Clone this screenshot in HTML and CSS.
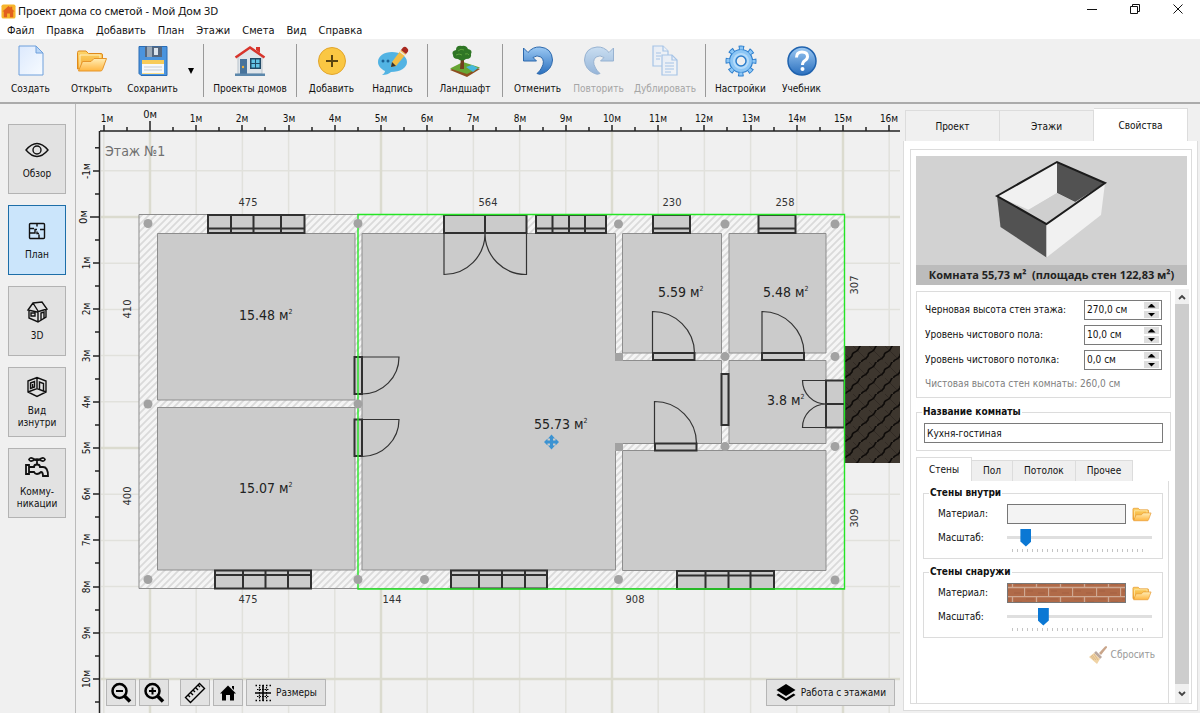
FILE: index.html
```html
<!DOCTYPE html>
<html lang="ru">
<head>
<meta charset="utf-8">
<title>Проект дома со сметой - Мой Дом 3D</title>
<link rel="stylesheet" href="styles.css">
</head>
<body>
<svg class="defs" aria-hidden="true">
  <defs>
    <linearGradient id="gold" x1="0" y1="0" x2="0" y2="1"><stop offset="0" stop-color="#fdd56b"/><stop offset="1" stop-color="#f3a72c"/></linearGradient>
    <linearGradient id="goldLight" x1="0" y1="0" x2="0" y2="1"><stop offset="0" stop-color="#ffedb5"/><stop offset="1" stop-color="#ffb640"/></linearGradient>
    <linearGradient id="paper" x1="0" y1="0" x2="1" y2="1"><stop offset="0" stop-color="#dce9fd"/><stop offset="1" stop-color="#f7fbff"/></linearGradient>
    <linearGradient id="blue" x1="0" y1="0" x2="0" y2="1"><stop offset="0" stop-color="#9cc9f3"/><stop offset="1" stop-color="#2a6fbe"/></linearGradient>
    <symbol id="folder" viewBox="0 0 32 24">
      <path d="M1.500 20V3.500Q1.500 2 3 2H10L12.500 4.500H25Q26.500 4.500 26.500 6V12L6 20Z" fill="url(#gold)" stroke="#e08a1c"/>
      <path d="M4 19V6H24V10" fill="none" stroke="#fff0c0"/>
      <path d="M2.500 22L6.500 12.500H15L18 9.500H30.500L26.500 20.500Q26 22 24.500 22Z" fill="url(#goldLight)" stroke="#e6952a"/>
    </symbol>
  </defs>
</svg>

<header class="titlebar">
  <svg class="app-icon" viewBox="0 0 16 16"><rect width="15" height="15" x=".5" y=".5" rx="2" fill="#f7b52c"/><path d="M1.500 8L8 2L10 4V3H12V5.500L14.500 8H13V14H9.500V10H6.500V14H3V8Z" fill="#e2601f"/></svg>
  <h1 class="title">Проект дома со сметой - Мой Дом 3D</h1>
  <button class="win-btn" type="button" aria-label="Свернуть"><svg viewBox="0 0 12 12"><path d="M1 6.500H11" /></svg></button>
  <button class="win-btn" type="button" aria-label="Развернуть"><svg viewBox="0 0 12 12"><path d="M1.500 3.500H8.500V10.500H1.500ZM3.500 3.500V1.500H10.500V8.500H8.500"/></svg></button>
  <button class="win-btn" type="button" aria-label="Закрыть"><svg viewBox="0 0 12 12"><path d="M1.500 1.500L10.500 10.500M10.500 1.500L1.500 10.500"/></svg></button>
</header>

<nav class="menu">
  <button type="button">Файл</button><button type="button">Правка</button><button type="button">Добавить</button><button type="button">План</button><button type="button">Этажи</button><button type="button">Смета</button><button type="button">Вид</button><button type="button">Справка</button>
</nav>

<div class="toolbar">
  <button class="tool" type="button"><svg viewBox="0 0 32 32"><path d="M4 1H21L28 8V30H4Z" fill="url(#paper)" stroke="#6ea0dc"/><path d="M21 1V8H28Z" fill="#b9d6f7" stroke="#6ea0dc"/></svg>Создать</button>
  <button class="tool" type="button"><svg viewBox="0 0 32 32"><use href="#folder" y="4" width="32" height="24"/></svg>Открыть</button>
  <button class="tool" type="button"><svg viewBox="0 0 32 32"><path d="M2 1.500H30V30.500H4L2 28.500Z" fill="#4a94de" stroke="#2a6cb5"/><path d="M8 1.500H25V12H8Z" fill="#55677e"/><path d="M17 3H21V10H17Z" fill="#dce5ee"/><path d="M10 1.500H15V12H10Z" fill="#9aa9b8"/><path d="M5 15H27V28.500H5Z" fill="#f6f8fa"/><path d="M5 15H27V19H5Z" fill="#f7cb58"/><path d="M7 22H25M7 25H25" stroke="#c5ccd4"/><path d="M5 28.500H27" stroke="#ffe08a"/></svg>Сохранить</button>
  <button class="tool-arrow" type="button" aria-label="Варианты сохранения"><svg viewBox="0 0 6 6"><path d="M0 0H6L3 6Z"/></svg></button>
  <span class="sep"></span>
  <button class="tool tool-wide" type="button"><svg viewBox="0 0 32 32"><path d="M4 12L16 3L28 12V29H4Z" fill="#dfe5ea" stroke="#b9c3cb"/><path d="M1.500 12.500L16 2.500L30.500 12.500" fill="none" stroke="#d8352c" stroke-width="2.500"/><path d="M22 2H26V8L22 5Z" fill="#d8352c"/><path d="M6 14H13V29H6Z" fill="#47739b"/><path d="M16 13H27V24H16Z" fill="#214a66"/><path d="M17.500 14.500H21V18H17.500ZM22 14.500H25.500V18H22ZM17.500 19H21V22.500H17.500ZM22 19H25.500V22.500H22Z" fill="#62c3e4"/><circle cx="9" cy="22" r="1.200" fill="#f0b23c"/><path d="M1 28.500H31V31H1Z" fill="#5b87ab"/></svg>Проекты домов</button>
  <span class="sep"></span>
  <button class="tool" type="button"><svg viewBox="0 0 32 32"><circle cx="16" cy="16" r="13.500" fill="#fac743" stroke="#e2a52c"/><path d="M16 10V22M10 16H22" stroke="#5a4410" stroke-width="2"/></svg>Добавить</button>
  <button class="tool" type="button"><svg viewBox="0 0 32 32"><path d="M15 7C7 7 1 11 1 17C1 21 4 24 8 26C8 28 6 29 5 30C9 30 12 29 14 27C23 27 30 23 30 17C30 11 23 7 15 7Z" fill="#52b3e3"/><circle cx="6" cy="16" r="1.500" fill="#1b6296"/><circle cx="11" cy="16" r="1.500" fill="#1b6296"/><path d="M15 17L24 5L29 9L19 21L14 22Z" fill="#f3bd45"/><path d="M24 5L26 2.500Q28 1 30 3Q32 4.500 31 6.500L29 9Z" fill="#a8281f"/><path d="M15 17L19 21L14 22Z" fill="#333"/><path d="M23 6.500L28 10.500" stroke="#e9e9e9" stroke-width="1.500"/></svg>Надпись</button>
  <span class="sep"></span>
  <button class="tool tool-mid" type="button"><svg viewBox="0 0 32 32"><path d="M1 25L14 18L31 24L18 32Z" fill="#8d4f20"/><path d="M1 23.500L14 17L31 22.500L18 29Z" fill="#67a634"/><path d="M17 22L23 20L29 23L24 27Z" fill="#46b8dd"/><path d="M12 12H15V24H11Z" fill="#73401d"/><path d="M13 1Q7 0 7 5Q2 6 4 10Q4 14 9 14Q13 17 17 14Q23 14 22 9Q24 5 19 4Q17 0 13 1Z" fill="#2f7625"/><path d="M9 6Q12 3 15 5M7 10Q10 8 13 10M16 9Q19 8 20 10" stroke="#5ba33c" fill="none"/></svg>Ландшафт</button>
  <span class="sep"></span>
  <button class="tool" type="button"><svg viewBox="0 0 32 32"><path d="M1.500 3V16H14.500L11 12.500Q15 9.500 19 12Q23.500 16 19.500 23Q18 26 15 28.500Q17.500 30 20.500 28.500Q30 24.500 30.500 15Q30 3 18 2Q11 1.500 6 7.500Z" fill="url(#blue)" stroke="#2d69ad"/></svg>Отменить</button>
  <button class="tool" type="button" disabled><svg viewBox="0 0 32 32"><path d="M30.500 3V16H17.500L21 12.500Q17 9.500 13 12Q8.500 16 12.500 23Q14 26 17 28.500Q14.500 30 11.500 28.500Q2 24.500 1.500 15Q2 3 14 2Q21 1.500 26 7.500Z" fill="url(#blue)" stroke="#2d69ad"/></svg>Повторить</button>
  <button class="tool tool-dup" type="button" disabled><svg viewBox="0 0 32 32"><g fill="url(#paper)" stroke="#4e8fdb" stroke-width="1.200"><path d="M4 1H14L19 6V21H4Z"/><path d="M14 1V6H19"/><path d="M13 10H23L28 15V30H13Z"/><path d="M23 10V15H28M16 18H25M16 21H25M16 24H25M16 27H22M7 8H12M7 11H12M7 14H11" fill="none"/></g></svg>Дублировать</button>
  <span class="sep"></span>
  <button class="tool" type="button"><svg viewBox="0 0 32 32"><circle cx="16" cy="16" r="13" fill="none" stroke="#2b7dcc" stroke-width="5" stroke-dasharray="5.200 5.010" stroke-dashoffset="2.600"/><circle cx="16" cy="16" r="11.500" fill="#8cc6f5" stroke="#2b7dcc" stroke-width="1.200"/><circle cx="16" cy="16" r="13" fill="none" stroke="#8cc6f5" stroke-width="3.200" stroke-dasharray="3.400 6.810" stroke-dashoffset="1.700"/><circle cx="16" cy="16" r="8" fill="#b4dbfa"/><circle cx="16" cy="16" r="5" fill="#efefef" stroke="#2b7dcc" stroke-width="1.500"/></svg>Настройки</button>
  <button class="tool" type="button"><svg viewBox="0 0 32 32"><circle cx="16" cy="16" r="14" fill="url(#blue)" stroke="#1f62ae" stroke-width="1.500"/><path d="M10.500 12.500Q10.500 7 16 7Q21.500 7 21.500 11.500Q21.500 14 19 15.500Q16.500 17 16.500 20" fill="none" stroke="#fff" stroke-width="3"/><circle cx="16.500" cy="24" r="2" fill="#fff"/></svg>Учебник</button>
</div>

<main class="workspace">
  <nav class="views">
    <button class="view" type="button"><svg viewBox="0 0 24 24"><path d="M1 12Q12 -1 23 12Q12 25 1 12Z"/><circle cx="12" cy="12" r="4"/></svg>Обзор</button>
    <button class="view view-active" type="button"><svg viewBox="0 0 24 24"><rect x="4.500" y="4.500" width="15" height="15" rx="1"/><path d="M4.500 9.500H9M12 4.500V7.500M4.500 14H10V10.500H12M14 19.500V15.500M15 10.500H19.500M12 12.500V14.500H14" /></svg>План</button>
    <button class="view" type="button"><svg viewBox="0 0 24 24"><path d="M3 10L8 3L17 2L22 9L12 12ZM8 3L13 11M4 10V18L13 22L21 17V9M13 12V22M6 13H10V16H6ZM16 20V13L19 12V18" /></svg>3D</button>
    <button class="view" type="button"><svg viewBox="0 0 24 24"><path d="M3 6L12 2.500L21 6V17L12 21.500L3 17ZM12 2.500V14M3 17L12 13.500L21 17M5.500 8L9.500 6.500V12L5.500 13.500ZM14.500 14V7L18.500 8.500V15.500M7.500 9V12"/></svg>Вид<br>изнутри</button>
    <button class="view" type="button"><svg viewBox="0 0 24 24"><path d="M1 9H4V18H1ZM4 11H9Q9 8.500 12 8.500Q15 8.500 15 11H18Q23 11 23 20H18Q18 16 16 16Q14 18 12 18Q10 18 9 16H4M12 8.500V5M8 2.500Q12 6 16 2.500Q19 1 20 3.500Q19 6 16 4.500Q12 2 8 4.500Q5 6 4 3.500Q5 1 8 2.500" stroke-width="1.800"/></svg>Комму-<br>никации</button>
  </nav>

  <section class="canvas" aria-label="План этажа">
    <svg class="plan" id="plan">
      <defs>
        <pattern id="hatch" width="7" height="7" patternUnits="userSpaceOnUse"><rect width="7" height="7" fill="#f5f5f5"/><path d="M-1 1L1 -1M0 7L7 0M6 8L8 6" stroke="#dadada" stroke-width="1.800"/></pattern>
        <pattern id="tiles" x="845" y="346" width="16" height="16" patternUnits="userSpaceOnUse"><rect width="16" height="16" fill="#3d362e"/><path d="M-2 6L6 14M6 -2L18 10" stroke="#312a24"/><path d="M18 -2Q15 -1 14 2Q13 5 10 6Q7 7 7 10Q5 13 2 14L-2 18" stroke="#0e0b09" stroke-width="1.600" fill="none"/></pattern>
      </defs>
      <g transform="translate(-76 -104)">
        <g id="grid"></g>
        <path class="wall" fill="url(#hatch)" d="M139 214.500H844.500V588.500H139Z"/>
        <g class="rooms">
          <path d="M157.500 233.500H355V400H157.500Z"/>
          <path d="M157.500 407.500H355V570H157.500Z"/>
          <path d="M362 233.500H615.500V360.500H721.500V443.500H615.500V570H362Z"/>
          <path d="M622.500 233.500H721.500V353H622.500Z"/>
          <path d="M729 233.500H826V353H729Z"/>
          <path d="M729 360.500H826V443.500H729Z"/>
          <path d="M622.500 450.500H826V570.500H622.500Z"/>
        </g>
        <rect x="845" y="346" width="55" height="117" fill="url(#tiles)"/>
        <g class="openings">
          <path d="M208 215H304.500V233H208ZM231 215V233M253.500 215V233M281 215V233M208 228.500H304.500"/>
          <path d="M215 570.500H311V588.500H215ZM243 570.500V588.500M265.500 570.500V588.500M288 570.500V588.500M215 575H311"/>
          <path d="M451 570.500H547V588.500H451ZM479 570.500V588.500M502 570.500V588.500M525 570.500V588.500M451 575H547"/>
          <path d="M677 571H774V589H677ZM705.500 571V589M728.500 571V589M750.500 571V589M677 575.500H774"/>
          <path d="M536 215H606V233H536ZM552.500 215V233M569 215V233M585 215V233M536 228.500H606"/>
          <path d="M653 215H690V233H653ZM653 228.500H690"/>
          <path d="M758.500 215H795.500V233H758.500ZM758.500 228.500H795.500"/>
          <path d="M444 215H526.500V233H444ZM485 215V233"/>
          <path d="M354.500 357H362V394H354.500ZM354.500 419.500H362V456H354.500Z"/>
          <path d="M653 353H694.500V360H653ZM762 353H804V360H762ZM655 443.500H696.500V450.500H655Z"/>
          <path d="M721.500 374H728.500V425H721.500ZM826 380.500H844.500V427.500H826ZM826 404H844.500"/>
        </g>
        <g class="leaves">
          <path d="M444 233V274.500A41 41 0 0 0 485 233A41 41 0 0 0 526.500 274.500V233"/>
          <path d="M362 357H399A37 37 0 0 1 362 394M362 419.500H399A37 37 0 0 1 362 456.500"/>
          <path d="M652.500 353V311.500A42 42 0 0 1 694.500 353M762 353V311.500A42 42 0 0 1 804 353M654.500 443.500V401.500A42 42 0 0 1 696.500 443.500"/>
          <path d="M826 380.500H802.500A23.500 23.500 0 0 0 826 404A23.500 23.500 0 0 0 802.500 427.500H826"/>
        </g>
        <path class="selection" d="M358 214.500H844.500V589H358Z"/>
        <g class="nodes">
          <circle cx="148" cy="223.500" r="4.500"/><circle cx="358" cy="223.500" r="4.500"/><circle cx="618.500" cy="224" r="4.500"/><circle cx="725" cy="224" r="4.500"/><circle cx="835" cy="224" r="4.500"/>
          <circle cx="148" cy="404" r="4.500"/><circle cx="358" cy="404" r="4.500"/><circle cx="725" cy="356.500" r="4.500"/><circle cx="835" cy="356.500" r="4.500"/><circle cx="725" cy="446.500" r="4.500"/><circle cx="835" cy="446.500" r="4.500"/>
          <circle cx="148" cy="579.500" r="4.500"/><circle cx="358" cy="579.500" r="4.500"/><circle cx="424.500" cy="579.500" r="4.500"/><circle cx="618.500" cy="579.500" r="4.500"/><circle cx="835" cy="580" r="4.500"/>
          <rect x="615" y="353" width="8" height="8"/><rect x="615" y="443" width="8" height="8"/>
        </g>
        <g class="dims">
          <text x="248" y="206">475</text><text x="488" y="206">564</text><text x="672" y="206">230</text><text x="785" y="206">258</text>
          <text x="248" y="603">475</text><text x="392" y="603">144</text><text x="635" y="603">908</text>
          <text transform="translate(131 309) rotate(-90)">410</text><text transform="translate(131 496) rotate(-90)">400</text>
          <text transform="translate(858 285) rotate(-90)">307</text><text transform="translate(858 518) rotate(-90)">309</text>
        </g>
        <g class="areas">
          <text x="239" y="320">15.48 м<tspan class="sup" dy="-6">2</tspan></text>
          <text x="239" y="493">15.07 м<tspan class="sup" dy="-6">2</tspan></text>
          <text x="534" y="429">55.73 м<tspan class="sup" dy="-6">2</tspan></text>
          <text x="658" y="297">5.59 м<tspan class="sup" dy="-6">2</tspan></text>
          <text x="763" y="297">5.48 м<tspan class="sup" dy="-6">2</tspan></text>
          <text x="767" y="405">3.8 м<tspan class="sup" dy="-6">2</tspan></text>
        </g>
        <path class="move" d="M551.500 434.500L555 438.500H553V440.500H555.500V438.500L559 442L555.500 445.500V443.500H553V445.500H555L551.500 449.500L548 445.500H550V443.500H547.500V445.500L544 442L547.500 438.500V440.500H550V438.500H548Z"/>
        <text class="floor-name" x="105" y="156">Этаж №1</text>
        <g id="rulers" class="rulers"></g>
      </g>
    </svg>
    <div class="canvas-tools">
      <button class="cbtn" type="button" aria-label="Уменьшить"><svg viewBox="0 0 22 22"><circle cx="9.500" cy="9" r="7" fill="none" stroke="#000" stroke-width="2.500"/><path d="M6 9H13" stroke="#000" stroke-width="2"/><path d="M14.500 14L20 19.500" stroke="#000" stroke-width="3.500"/></svg></button>
      <button class="cbtn" type="button" aria-label="Увеличить"><svg viewBox="0 0 22 22"><circle cx="9.500" cy="9" r="7" fill="none" stroke="#000" stroke-width="2.500"/><path d="M6 9H13M9.500 5.500V12.500" stroke="#000" stroke-width="2"/><path d="M14.500 14L20 19.500" stroke="#000" stroke-width="3.500"/></svg></button>
      <button class="cbtn cbtn-split" type="button" aria-label="Линейка"><svg viewBox="0 0 22 22"><path d="M1.500 15.500L15.500 1.500L20.500 6.500L6.500 20.500ZM4 13L6 15M6.500 10.500L9 13M9 8L11 10M11.500 5.500L14 8M14 3L16 5" fill="none" stroke="#000" stroke-width="1.400"/></svg></button>
      <button class="cbtn" type="button" aria-label="Показать весь дом"><svg viewBox="0 0 22 22"><path d="M11 3.500L19 11.500H17V18.500H13V13H9V18.500H5V11.500H3ZM15 4H17V8L15 6Z"/></svg></button>
      <button class="cbtn cbtn-text" type="button"><svg viewBox="0 0 22 22"><path d="M7.500 5V17M14.500 5V17M5 7.500H17M5 14.500H17" stroke="#000" stroke-width="1.200" stroke-dasharray="1.500 1" fill="none"/><path d="M11 3V19M3 11H19" stroke="#000" stroke-width="1.600" fill="none"/><path d="M3.500 3.500H19M3.500 18.500H19" stroke="#000" stroke-width="1.400" stroke-dasharray="1.500 2" fill="none"/></svg>Размеры</button>
      <button class="cbtn cbtn-text cbtn-right" type="button"><svg viewBox="0 0 22 22"><path d="M11 2L20.500 8L11 14L1.500 8Z"/><path d="M3.500 11.500L1.500 13L11 19L20.500 13L18.500 11.500L11 16.300Z"/></svg>Работа с этажами</button>
    </div>
  </section>

  <aside class="side">
    <div class="tabs" role="tablist">
      <button class="tab" type="button" role="tab">Проект</button><button class="tab" type="button" role="tab">Этажи</button><button class="tab tab-active" type="button" role="tab" aria-selected="true">Свойства</button>
    </div>
    <div class="page">
      <div class="frame">
        <figure class="preview">
          <svg viewBox="0 0 271 109">
            <path d="M81 40L141 6V37L113 54Z" fill="#f1f1f1"/>
            <path d="M141 6L189 27L159 46L141 37Z" fill="#525252"/>
            <path d="M141 37L159 46L130.500 67L112 54Z" fill="#cfcfcf"/>
            <path d="M81 40L130.500 68V101.500L84.500 71Z" fill="#525252"/>
            <path d="M189 27L130.500 68V101.500L185 59Z" fill="#f1f1f1"/>
            <path d="M81 40L141 6L189 27L130.500 68Z" fill="none" stroke="#1c1c1c" stroke-width="2"/>
          </svg>
          <figcaption>Комната 55,73 м²&nbsp; (площадь стен 122,83 м²)</figcaption>
        </figure>
        <div class="scroll">
          <form class="props">
            <div class="box">
              <div class="row"><label for="h1">Черновая высота стен этажа:</label><span class="spin"><input id="h1" type="text" value="270,0 см"><span class="spin-btns"><button type="button" aria-label="Больше"></button><button class="down" type="button" aria-label="Меньше"></button></span></span></div>
              <div class="row"><label for="h2">Уровень чистового пола:</label><span class="spin"><input id="h2" type="text" value="10,0 см"><span class="spin-btns"><button type="button" aria-label="Больше"></button><button class="down" type="button" aria-label="Меньше"></button></span></span></div>
              <div class="row"><label for="h3">Уровень чистового потолка:</label><span class="spin"><input id="h3" type="text" value="0,0 см"><span class="spin-btns"><button type="button" aria-label="Больше"></button><button class="down" type="button" aria-label="Меньше"></button></span></span></div>
              <p class="note">Чистовая высота стен комнаты: 260,0 см</p>
            </div>
            <fieldset class="group name-group">
              <legend>Название комнаты</legend>
              <input class="name" type="text" aria-label="Название комнаты" value="Кухня-гостиная">
            </fieldset>
            <div class="subtabs" role="tablist">
              <button class="subtab subtab-active" type="button" role="tab" aria-selected="true">Стены</button><button class="subtab" type="button" role="tab">Пол</button><button class="subtab" type="button" role="tab">Потолок</button><button class="subtab" type="button" role="tab">Прочее</button>
            </div>
            <div class="pane">
              <fieldset class="group surface">
                <legend>Стены внутри</legend>
                <span>Материал:</span>
                <button class="swatch" type="button" aria-label="Материал стен внутри"></button>
                <button class="open" type="button" aria-label="Выбрать материал"><svg viewBox="0 0 32 24"><use href="#folder"/></svg></button>
                <label for="s1">Масштаб:</label>
                <div class="slider"><input id="s1" type="range" min="0" max="100" value="10"><div class="ticks"></div></div>
              </fieldset>
              <fieldset class="group surface">
                <legend>Стены снаружи</legend>
                <span>Материал:</span>
                <button class="swatch" type="button" aria-label="Материал стен снаружи">
                  <svg><defs><pattern id="brick" x="-8" y="-6" width="24" height="18" patternUnits="userSpaceOnUse"><rect width="24" height="18" fill="#b06a48"/><path d="M0 .5H24M0 9.500H24M12.500 0V9M.5 9V18" stroke="#cfa993" stroke-width="1.300"/><path d="M2 3H10M15 6H22M3 13H9M14 15H21" stroke="#a56042"/></pattern></defs><rect width="100%" height="100%" fill="url(#brick)"/></svg>
                </button>
                <button class="open" type="button" aria-label="Выбрать материал"><svg viewBox="0 0 32 24"><use href="#folder"/></svg></button>
                <label for="s2">Масштаб:</label>
                <div class="slider"><input id="s2" type="range" min="0" max="100" value="23"><div class="ticks"></div></div>
              </fieldset>
              <button class="reset" type="button"><svg viewBox="0 0 20 20"><path d="M11 8L17 1.500Q19 0 19 2.500L13 10Z" fill="#c9a58a"/><path d="M8 6L14 12L12 14L6 8Z" fill="#b9a8a0"/><path d="M6 8L12 14L9 19L1 12Z" fill="#f0d3a5"/><path d="M4 10L8 15M3 11L6 15M6 9L10 15" stroke="#dcb98a"/></svg>Сбросить</button>
            </div>
          </form>
          <div class="scrollbar">
            <button type="button" aria-label="Вверх"><svg viewBox="0 0 8 6"><path d="M1 5L4 2L7 5"/></svg></button>
            <span class="thumb"></span>
            <button class="last" type="button" aria-label="Вниз"><svg viewBox="0 0 8 6"><path d="M1 1L4 4L7 1"/></svg></button>
          </div>
        </div>
      </div>
    </div>
  </aside>
</main>
<script src="plan.js"></script>
</body>
</html>
```

FILE: styles.css
```css
* { box-sizing: border-box; }

body {
  margin: 0;
  min-height: 100vh;
  display: flex;
  flex-direction: column;
  background: #f0f0f0;
  color: #111;
  font: 10px/14px "DejaVu Sans Condensed", "Noto Sans", sans-serif;
}

button, input {
  margin: 0;
  padding: 0;
  border: 0;
  background: none;
  color: inherit;
  font: inherit;
}

.defs { position: absolute; width: 0; height: 0; }

/* Title bar and menu */
.titlebar {
  display: flex;
  align-items: center;
  height: 22px;
  padding: 0 1px;
  background: #fff;
}
.app-icon { width: 15px; height: 15px; margin-right: 2px; }
.title {
  flex: 1;
  margin: 0;
  font: 11px/20px "Noto Sans", sans-serif;
}
.win-btn { width: 43px; height: 22px; }
.win-btn svg { width: 12px; height: 12px; }
.win-btn path { fill: none; stroke: #111; }
.menu {
  display: flex;
  gap: 12px;
  height: 17px;
  padding: 0 7px;
  background: #fff;
}
.menu button { font-size: 11px; line-height: 17px; }

/* Toolbar */
.toolbar {
  display: flex;
  align-items: center;
  height: 65px;
  border-bottom: 2px solid #ababab;
}
.tool {
  display: flex;
  flex-direction: column;
  align-items: center;
  gap: 5px;
  width: 61px;
  white-space: nowrap;
}
.tool svg { width: 32px; height: 32px; }
.tool-wide { width: 84px; }
.tool-mid { width: 66px; }
.tool-dup { width: 72px; }
.tool:disabled { color: #a5a5a5; }
.tool:disabled svg { opacity: .45; }
.tool-arrow { width: 16px; }
.tool-arrow svg { width: 6px; height: 6px; }
.sep { width: 1px; height: 53px; margin: 0 4px; background: #999; }

/* Workspace */
.workspace { flex: 1; display: flex; }
.views {
  display: flex;
  flex-direction: column;
  gap: 11px;
  width: 76px;
  padding: 20px 9px 0 8px;
  border-right: 1px solid #bbb;
}
.view {
  display: flex;
  flex-direction: column;
  align-items: center;
  justify-content: center;
  gap: 6px;
  height: 70px;
  border: 1px solid #b3b3b3;
  background: #e2e2e2;
  line-height: 12px;
}
.view svg { width: 24px; height: 24px; fill: none; stroke: #111; stroke-width: 1.4px; }
.view-active { border-color: #1d6ea8; background: #cbe5fb; }

/* Plan canvas */
.canvas { position: relative; flex: 1; min-width: 0; }
.plan { position: absolute; inset: 0; width: 100%; height: 100%; }
.wall { stroke: #8d8d8d; }
.rooms { fill: #cbcbcb; stroke: #8d8d8d; }
.openings { fill: #cbcbcb; stroke: #303030; stroke-width: 2px; }
.leaves { fill: none; stroke: #333; stroke-width: 1.2px; }
.selection { fill: none; stroke: #25e525; stroke-width: 1.4px; }
.nodes { fill: #a2a2a2; }
.move { fill: #3c93d2; }
.grid-line { stroke: #e1e1dc; stroke-width: 1.5px; }
.grid-major { stroke: #dbdbcf; stroke-width: 2.5px; }
.axis, .tick { stroke: #222; stroke-width: 1.5px; }
.dims, .rulers { fill: #333; font-size: 10px; text-anchor: middle; }
.dims { font-size: 11px; }
.rulers { fill: #111; }
.rulers .zero { font-size: 11px; }
.areas { fill: #222; font-size: 14px; }
.areas .sup { font-size: 7px; }
.floor-name { fill: #707070; font-size: 14px; }

.canvas-tools {
  position: absolute;
  left: 30px;
  right: 5px;
  bottom: 7px;
  display: flex;
  gap: 3px;
}
.cbtn {
  display: flex;
  align-items: center;
  justify-content: center;
  gap: 2px;
  width: 30px;
  height: 27px;
  border: 1px solid #b5b5b5;
  background: #e2e2e2;
}
.cbtn svg { width: 22px; height: 22px; }
.cbtn-split { margin-left: 8px; }
.cbtn-text { width: auto; padding: 0 8px 0 5px; }
.cbtn-right { gap: 4px; margin-left: auto; padding: 0 8px; }

/* Properties panel */
.side {
  display: flex;
  flex-direction: column;
  width: 300px;
  padding: 4px 2px 2px 3px;
}
.tabs { display: flex; align-items: flex-end; height: 33px; padding: 0 10px 0 2px; }
.tab { flex: 1; height: 31px; padding-top: 2px; border: 1px solid #dcdcdc; border-bottom: 0; }
.tab + .tab { border-left: 0; }
.tab-active { height: 33px; background: #fff; }
.page {
  flex: 1;
  display: flex;
  padding: 8px 5px 6px 6px;
  border: 1px solid #dcdcdc;
  border-top: 0;
  background: #fff;
}
.frame {
  flex: 1;
  display: flex;
  flex-direction: column;
  min-width: 0;
  border: 1px solid #dcdcdc;
}
.preview { margin: 6px 4px 4px 5px; background: #d2d2d2; }
.preview svg { display: block; width: 100%; height: 109px; }
.preview figcaption {
  height: 20px;
  background: #bcbcbc;
  color: #222;
  text-align: center;
  white-space: nowrap;
  font: bold 11px/20px "Open Sans", sans-serif;
}
.scroll { flex: 1; display: flex; gap: 4px; padding: 0 2px 0 5px; }
.props { flex: 1; display: flex; flex-direction: column; min-width: 0; padding-top: 2px; }
.box { height: 107px; padding: 8px 8px 0; border: 1px solid #dcdcdc; }
.row { display: flex; align-items: center; justify-content: space-between; margin-bottom: 5px; }
.spin {
  display: flex;
  align-items: center;
  width: 78px;
  height: 20px;
  padding: 0 2px;
  border: 1px solid #7a7a7a;
}
.spin input { flex: 1; min-width: 0; }
.spin-btns { display: grid; gap: 2px; }
.spin-btns button { display: grid; place-items: center; width: 15px; height: 7px; background: #dedede; }
.spin-btns button::before { content: ""; width: 8px; height: 4px; background: #000; clip-path: polygon(50% 0, 100% 100%, 0 100%); }
.spin-btns .down::before { clip-path: polygon(0 0, 100% 0, 50% 100%); }
.note { margin: 7px 0 0; color: #808080; white-space: nowrap; }
.group { min-width: 0; margin: 0; border: 1px solid #dcdcdc; }
.group legend { padding: 0 1px; font-weight: bold; line-height: 12px; }
.name-group { margin-top: 8px; padding: 5px 7px 7px; }
.name-group legend { margin-left: -2px; }
.name { display: block; width: 100%; height: 20px; padding: 0 2px; border: 1px solid #7a7a7a; }
.subtabs { display: flex; align-items: flex-end; height: 24px; margin-top: 6px; }
.subtab { height: 21px; padding: 0 11px; border: 1px solid #dcdcdc; border-left: 0; border-bottom: 0; background: #efefef; }
.subtab-active { height: 24px; padding: 0 12px; border-left: 1px solid #dcdcdc; background: #fff; }
.pane {
  flex: 1;
  display: flex;
  flex-direction: column;
  gap: 7px;
  margin-right: 2px;
  padding: 6px 5px 0 6px;
  border: 1px solid #dcdcdc;
  border-width: 0 1px;
}
.surface {
  display: grid;
  grid-template-columns: 69px 1fr 26px;
  row-gap: 4px;
  padding: 5px 10px 6px 14px;
}
.surface legend { margin-left: -9px; }
.surface > span, .surface > label { line-height: 20px; }
.swatch { display: block; height: 20px; border: 1px solid #777; background: #f3f3f3; overflow: hidden; }
.swatch svg { display: block; width: 100%; height: 100%; }
.open { display: grid; place-items: center end; height: 20px; }
.open svg { display: block; width: 20px; height: 15px; }
.slider { grid-column: 2 / 4; }
.slider input {
  display: block;
  width: 100%;
  height: 19px;
  -webkit-appearance: none;
  appearance: none;
  background: linear-gradient(#dfdfdf, #dfdfdf) center / 100% 3px no-repeat;
}
.slider input::-webkit-slider-thumb {
  -webkit-appearance: none;
  width: 11px;
  height: 18px;
  background: #0b78d4;
  clip-path: polygon(0 0, 100% 0, 100% 72%, 50% 100%, 0 72%);
}
.ticks { height: 3px; margin: 2px 5px 0; background: repeating-linear-gradient(90deg, #c4c4c4 0 1px, transparent 1px 5px); }
.reset { display: flex; align-items: center; gap: 3px; align-self: flex-end; margin-right: 8px; color: #999; }
.reset svg { width: 20px; height: 20px; }

.scrollbar { display: flex; flex-direction: column; width: 14px; background: #cdcdcd; }
.scrollbar button { display: grid; place-items: center; height: 15px; background: #f0f0f0; }
.scrollbar .last { height: 19px; }
.scrollbar svg { width: 8px; height: 6px; fill: none; stroke: #444; stroke-width: 1.8px; }
.thumb { flex: 1; background: #cdcdcd; }
```

FILE: plan.js
```js
// Draws the metre grid and both rulers of the plan, as far as the canvas reaches.
const NS = "http://www.w3.org/2000/svg";
const OFFSET = { x: 76, y: 104 };
const ORIGIN = { x: 150, y: 217 };
const STEP = 46.2;
const HALF = Math.round(STEP / 2);
const plan = document.getElementById("plan");
const grid = document.getElementById("grid");
const rulers = document.getElementById("rulers");

function line(parent, x1, y1, x2, y2, cls) {
  const el = document.createElementNS(NS, "line");
  Object.entries({ x1, y1, x2, y2, class: cls }).forEach(([k, v]) => el.setAttribute(k, v));
  parent.appendChild(el);
}

function label(text, transform, zero) {
  const el = document.createElementNS(NS, "text");
  el.textContent = text;
  el.setAttribute("transform", transform);
  if (zero) el.setAttribute("class", "zero");
  rulers.appendChild(el);
}

function draw() {
  const right = OFFSET.x + plan.clientWidth;
  const bottom = OFFSET.y + plan.clientHeight;
  grid.replaceChildren();
  rulers.replaceChildren();

  for (const cls of ["grid-line", "grid-major"]) {
    const wanted = (m) => (m >= 0 && m % 5 === 0) === (cls === "grid-major");
    for (let m = -1; ORIGIN.x + m * STEP < right; m++) {
      if (wanted(m)) line(grid, ORIGIN.x + m * STEP, 132, ORIGIN.x + m * STEP, bottom, cls);
    }
    for (let m = -1; ORIGIN.y + m * STEP < bottom; m++) {
      if (wanted(m)) line(grid, 101, ORIGIN.y + m * STEP, right, ORIGIN.y + m * STEP, cls);
    }
  }

  line(rulers, 100, 131, right, 131, "axis");
  line(rulers, 99.5, 131, 99.5, bottom, "axis");

  for (let m = -1; ORIGIN.x + m * STEP < right - 10; m++) {
    const x = Math.round(ORIGIN.x + m * STEP);
    const zero = m === 0;
    line(rulers, x, zero ? 121 : 125, x, 131, "tick");
    line(rulers, x + HALF, 127, x + HALF, 131, "tick");
    label(Math.abs(m) + "м", `translate(${m === -1 ? x + 3 : x} ${zero ? 118 : 122})`, zero);
  }
  line(rulers, 95, ORIGIN.y - STEP - HALF, 99, ORIGIN.y - STEP - HALF, "tick");
  for (let m = -1; ORIGIN.y + m * STEP < bottom - 12; m++) {
    const y = Math.round(ORIGIN.y + m * STEP);
    const zero = m === 0;
    line(rulers, zero ? 90 : 93, y, 99, y, "tick");
    line(rulers, 95, y + HALF, 99, y + HALF, "tick");
    label(m + "м", `translate(${zero ? 87 : 90} ${y}) rotate(-90)`, zero);
  }
}

draw();
window.addEventListener("resize", draw);
```
